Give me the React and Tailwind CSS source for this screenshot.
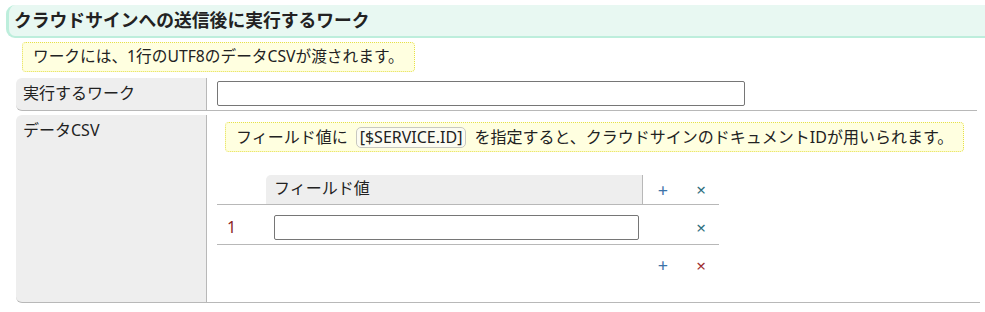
import React from "react";

const PlusBtn = () => (
  <span className="text-[#3b73a8] text-[18px] leading-none select-none">+</span>
);

const CrossBtn = ({ red }) => (
  <span className={red ? "text-[#a03030] text-[17px] leading-none select-none" : "text-[#2f6f80] text-[17px] leading-none select-none"}>×</span>
);

const App = () => {
  return (
    <div
      className="w-[985px] h-[312px] bg-white text-[#222] overflow-hidden"
      style={{ fontFamily: '"Noto Sans", "Noto Sans CJK JP", sans-serif' }}
    >
      <div className="pt-[5px] pl-[6px]">
        <div className="h-[33px] bg-[#e8f8f2] border-b-2 border-l-[3px] border-[#bdeedc] rounded-l-[9px] flex items-center pl-[5px]">
          <h2 className="text-[17.8px] font-bold text-[#222]">クラウドサインへの送信後に実行するワーク</h2>
        </div>
      </div>

      <div className="pl-[22px] mt-[4px]">
        <div className="inline-flex items-center h-[30px] px-[10px] bg-[#ffffe0] border border-dotted border-[#e5e04a] rounded-[4px] text-[15.7px]">
          ワークには、1行のUTF8のデータCSVが渡されます。
        </div>
      </div>

      <div className="pl-[16px] w-[977px] mt-[6px] text-[16px]">
        {/* 実行するワーク */}
        <div className="flex">
          <div className="w-[191px] shrink-0 h-[33px] bg-[#eeeeee] rounded-l-[6px] border-b border-r border-[#b8b8b8] pl-[7px] pt-[3px]">
            実行するワーク
          </div>
          <div className="flex-1 h-[33px] border-b border-[#b8b8b8] pl-[10px] pt-[3px]">
            <input type="text" className="w-[528px] h-[25px] border border-[#767676] rounded-[2px] bg-white" />
          </div>
        </div>

        {/* データCSV */}
        <div className="flex mt-[4px]">
          <div className="w-[191px] shrink-0 h-[188px] bg-[#eeeeee] rounded-l-[6px] border-b border-r border-[#b8b8b8] pl-[7px] pt-[3px]">
            データCSV
          </div>
          <div className="flex-1 h-[188px] border-b border-[#b8b8b8] pl-[10px] pt-[7px]">
            <div className="ml-[8px] mr-[16px] h-[30px] flex items-center px-[10px] bg-[#ffffe0] border border-dotted border-[#e5e04a] rounded-[4px] whitespace-nowrap">
              フィールド値に
              <span className="mx-[8px] px-[3px] h-[21px] flex items-center border border-[#c8c8c0] rounded-[5px] bg-[#fcfcf2]">[$SERVICE.ID]</span>
              を指定すると、クラウドサインのドキュメントIDが用いられます。
            </div>

            <div className="mt-[23px] w-[502px]">
              <div className="flex h-[30px] border-b border-[#b8b8b8]">
                <div className="w-[49px] shrink-0" />
                <div className="w-[377px] shrink-0 bg-[#eeeeee] rounded-tl-[5px] border-r border-[#b8b8b8] pl-[8px] pt-[1px]">
                  フィールド値
                </div>
                <div className="w-[40px] shrink-0 flex items-center justify-center"><PlusBtn /></div>
                <div className="w-[36px] shrink-0 flex items-center justify-center"><CrossBtn /></div>
              </div>
              <div className="flex h-[40px] items-center pt-[5px] border-b border-[#b8b8b8]">
                <div className="w-[49px] shrink-0 pl-[10px] text-[#8b1f1f]">1</div>
                <div className="w-[377px] shrink-0 pl-[8px] pr-[4px]">
                  <input type="text" className="w-full h-[25px] border border-[#767676] rounded-[2px] bg-white" />
                </div>
                <div className="w-[40px] shrink-0" />
                <div className="w-[36px] shrink-0 flex items-center justify-center"><CrossBtn /></div>
              </div>
              <div className="flex h-[40px] items-center">
                <div className="w-[49px] shrink-0" />
                <div className="w-[377px] shrink-0" />
                <div className="w-[40px] shrink-0 flex items-center justify-center"><PlusBtn /></div>
                <div className="w-[36px] shrink-0 flex items-center justify-center"><CrossBtn red /></div>
              </div>
            </div>
          </div>
        </div>
      </div>
    </div>
  );
};

export default App;
